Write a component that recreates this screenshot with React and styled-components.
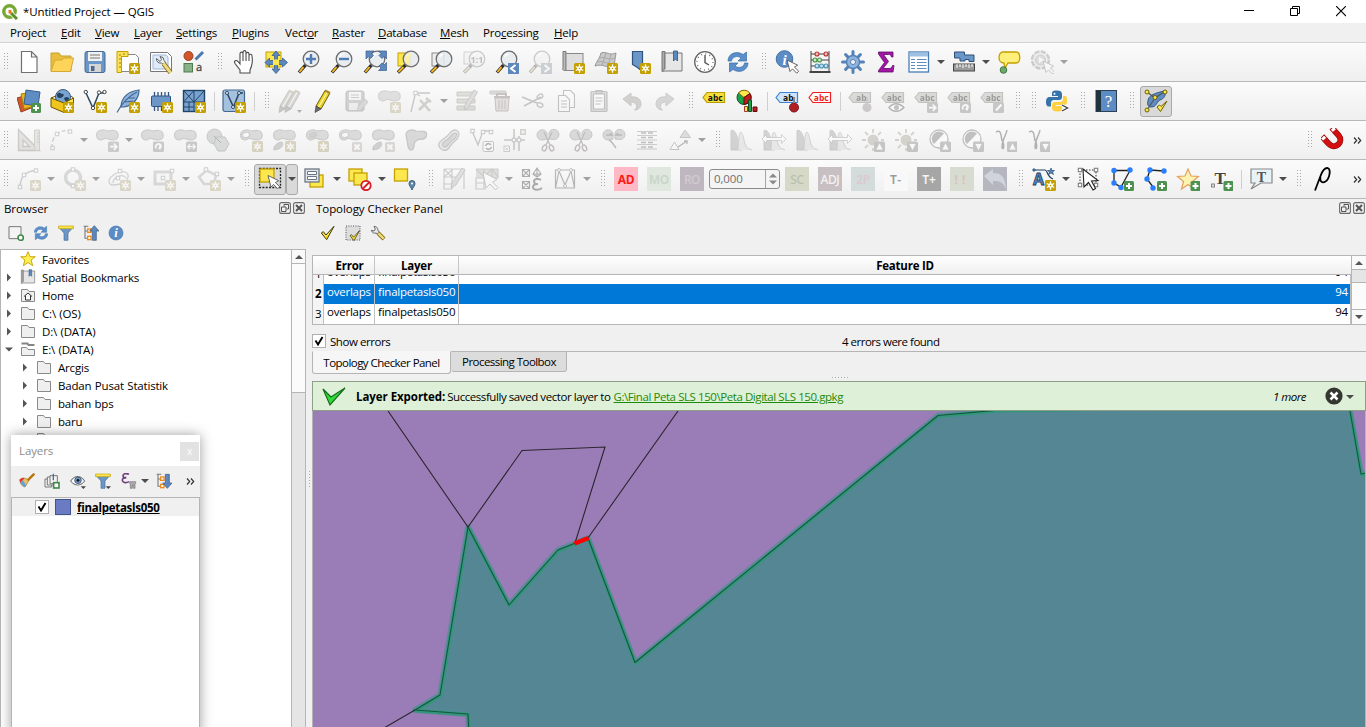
import React from 'react';
import styled, { createGlobalStyle, css } from 'styled-components';

const Global = createGlobalStyle`
  * { box-sizing: border-box; }
  html, body { margin: 0; padding: 0; overflow: hidden; }
  body { font-family: "Open Sans", "Noto Sans", sans-serif; font-size: 11.5px; letter-spacing: -0.2px; color: #000; background: #f0f0f0; }
  svg { display: block; flex: none; }
  svg text { letter-spacing: 0; }
`;

/* ---------- shared parts ---------- */

const Window = styled.div`
  width: 1366px;
  height: 727px;
  display: flex;
  flex-direction: column;
  overflow: hidden;
  background: #f0f0f0;
  white-space: nowrap;
  cursor: default;
`;

const TitleBar = styled.header`
  height: 23px;
  flex: none;
  display: flex;
  align-items: center;
  background: #fff;
  padding-left: 2px;
`;

const WindowTitle = styled.span`
  flex: 1;
  margin-left: 5px;
  letter-spacing: -0.13px;
`;

const Controls = styled.div`
  display: flex;
  width: 138px;
  height: 20px;
  justify-content: space-around;
  align-items: center;
  margin-right: 2px;
`;

const MenuBar = styled.nav`
  height: 20px;
  flex: none;
  display: flex;
  gap: 14px;
  padding-left: 10px;
  line-height: 20px;
  border-bottom: 1px solid #d2d2d2;
`;

const MenuItem = styled.span`
  width: ${(p) => p.$w}px;
  letter-spacing: -0.2px;
  u { text-underline-offset: 1px; }
`;

const ToolRow = styled.div`
  height: 39px;
  flex: none;
  display: flex;
  align-items: center;
  background: linear-gradient(#fbfbfb, #efefef);
  border-bottom: 1px solid #b8b8b8;
`;

const Tool = styled.div`
  width: 33px;
  height: 32px;
  padding-left: 5px;
  flex: none;
  display: flex;
  align-items: center;
  ${(p) => p.$off && css`opacity: ${p.$off === true ? 0.32 : p.$off}; filter: grayscale(0.7);`}
`;

const Pressed = styled.div`
  width: ${(p) => p.$w}px;
  height: 31px;
  flex: none;
  margin-left: ${(p) => p.$ml || 0}px;
  display: flex;
  align-items: center;
  justify-content: center;
  border: 1px solid #a9a9a9;
  border-radius: 3px;
  background: #d9d9d9;
`;

const GripBox = styled.span`
  width: ${(p) => p.$w || 16}px;
  height: 18px;
  flex: none;
  display: flex;
  justify-content: flex-end;
  padding-right: 3px;
`;

const GripDots = styled.i`
  width: 5px;
  height: 17px;
  background-image: radial-gradient(circle at 0.5px 0.5px, #aaa 0.7px, transparent 0.8px);
  background-size: 3px 3px;
`;

const Sep = styled.i`
  width: 7px;
  height: 19px;
  flex: none;
  background: linear-gradient(#cfcfcf, #cfcfcf) 4px 0 / 1px 100% no-repeat;
`;

const Spacer = styled.i`
  flex: 1;
`;

const ArrowBox = styled.i`
  width: 12px;
  flex: none;
  display: flex;
  justify-content: center;
  opacity: ${(p) => (p.$off ? 0.5 : 1)};
  &::after {
    content: "";
    border: 4px solid transparent;
    border-top-color: #4c4c4c;
    border-bottom: 0;
  }
`;

const More = styled.span`
  width: 17px;
  flex: none;
  display: flex;
  justify-content: center;
`;

const Tile = styled.span`
  width: 24px;
  height: 24px;
  display: flex;
  align-items: center;
  justify-content: center;
  background: ${(p) => p.$bg};
  color: ${(p) => p.$fg};
  font: ${(p) => p.$weight || 400} 12px "Noto Sans", sans-serif;
  letter-spacing: ${(p) => p.$ls ?? -0.4}px;
`;

const SpinBox = styled.div`
  width: 71px;
  height: 20px;
  margin-left: 1px;
  flex: none;
  display: flex;
  align-items: center;
  border: 1px solid #8b8b8b;
  border-radius: 3px;
  background: #f4f4f4;
  color: #6f6f72;
  padding-left: 4px;
  letter-spacing: -0.1px;
  line-height: 18px;
`;

const SpinButtons = styled.span`
  width: 14px;
  height: 18px;
  margin-left: auto;
  border-left: 1px solid #a5a5a5;
  display: flex;
  align-items: center;
  justify-content: center;
`;

/* ---------- icon drawings ---------- */

const Svg = ({ s = 24, children }) => (
  <svg width={s} height={s} viewBox="0 0 24 24" fill="none">{children}</svg>
);

const Star = () => (
  <g>
    <rect x="13" y="13" width="11" height="11" rx="1.5" fill="#c4a000" />
    <path d="M18.500 14.300v8.400M14.800 16.500l7.400 4M22.200 16.500l-7.400 4" stroke="#fff" strokeWidth="1.300" />
    <circle cx="18.500" cy="18.500" r="2.300" fill="#fff" />
    <circle cx="18.500" cy="18.500" r=".8" fill="#c4a000" />
  </g>
);
const Plus = () => (
  <g>
    <rect x="14" y="14" width="10" height="10" rx="1.500" fill="#4e9250" />
    <path d="M19 16v6M16 19h6" stroke="#fff" strokeWidth="2" />
  </g>
);
const Cross = () => (
  <g>
    <rect x="14" y="14" width="10" height="10" rx="1.500" fill="#c9a0a0" />
    <path d="M16.500 16.500l5 5M21.500 16.500l-5 5" stroke="#fff" strokeWidth="2" />
  </g>
);
const Box = ({ children }) => (
  <g>
    <rect x="13" y="13.500" width="11" height="10.500" rx="1.500" fill="#808880" />
    <g stroke="#fff" strokeWidth="1.700">{children}</g>
  </g>
);
const BoxRight = () => <Box><path d="M15 18.700h6M18.800 15.500l3 3.200-3 3.200" /></Box>;
const BoxTurn = () => <Box><path d="M16 20.500c-2-5 5-6 5-2.500 0 1-1 2-2.500 2M20 16.500v5" /></Box>;
const BoxMove = () => <Box><path d="M15 18.700h7M17 16.300l-2.200 2.400 2.200 2.400M20 16.300l2.200 2.400-2.200 2.400" strokeWidth="1.300" /></Box>;
const BoxUp = () => <Box><path d="M15.500 21.500h6l-3-6z" fill="#fff" strokeWidth=".2" /></Box>;
const BoxDown = () => <Box><path d="M15.500 16h6l-3 6z" fill="#fff" strokeWidth=".2" /></Box>;

const Blob = ({ hole, inner }) => (
  <g fill="#a9b1a7" stroke="#858c84" strokeWidth="1.200">
    <path d="M1.500 7C1.500 2.500 7 1 11 2.500c3 1 5-.500 8 0 5 .500 5.500 7.500 1.500 9-3 1.300-6.500-.500-9.500-1-2.500-.400-3 1.500-5.500 1.500C3 12 1.500 9.500 1.500 7z" />
    {hole && <ellipse cx="7" cy="7" rx="3.600" ry="2.600" fill="#fafafa" transform="rotate(-15 7 7)" />}
    {inner && <ellipse cx="8" cy="7" rx="3.800" ry="2.600" fill="#8d958b" transform="rotate(-15 8 7)" />}
  </g>
);
const Part = () => <path d="M2 22c-1-4 4-8 8-8 2 3 0 7-8 8z" fill="#949c92" stroke="#757c74" />;
const Lens = ({ x = 14, y = 9 }) => (
  <g>
    <path d={`M${x - 5.500} ${y + 6}L2 22.500`} stroke="#2e2e2e" strokeWidth="3.400" />
    <path d={`M${x - 7.500} ${y + 8}L2.500 22`} stroke="#f5b71f" strokeWidth="2" />
    <circle cx={x} cy={y} r="7.800" fill="#e8ebee" fillOpacity=".85" stroke="#6c6e70" strokeWidth="1.300" />
    <path d={`M${x - 4.500} ${y - 2}a5 5 0 0 1 4-3`} stroke="#fff" strokeWidth="1.500" />
  </g>
);
const Cursor = ({ x = 10, y = 10 }) => (
  <path transform={`translate(${x} ${y})`} d="M0 0l3 11.500 2.500-2.600 4.200 4.300 2-2-4.300-4.200 3.300-1.800z" fill="#fff" stroke="#555" strokeWidth=".9" />
);
const Tag = ({ fill = '#f7df3a', stroke = '#b89b00', color = '#111', text = 'abc', y = 3 }) => (
  <g>
    <path d={`M1 ${y + 5.500}l4-5h17.500v10H5z`} fill={fill} stroke={stroke} strokeWidth="1.200" />
    <text x="13.300" y={y + 8.600} fontSize="8.500" fontWeight="700" fontFamily="Noto Sans, sans-serif" textAnchor="middle" fill={color}>{text}</text>
  </g>
);
const Pencil = ({ dx = 0, body = '#e8cf28' }) => (
  <g transform={`translate(${dx} 0)`}>
    <path d="M6 17L15 1.500l5 2.500-9 16z" fill={body} stroke="#6d6313" strokeWidth="1" />
    <path d="M8.500 18.200L17.500 2.800" stroke="#fff8a8" strokeWidth="1.200" />
    <path d="M6 17l5 3-6 3.500z" fill="#6c6c6c" stroke="#333" strokeWidth=".6" />
    <path d="M15 1.500l5 2.500" stroke="#b0862c" strokeWidth="2" />
  </g>
);
const Hist = ({ arrows }) => (
  <g>
    <path d="M2 22V2.500C8 0 9 16 13 22z" fill="#9aaa90" stroke="#8a9582" />
    <path d="M9 22c1-24 4-20 6-10s5 8 8 10" fill="#d6d6d6" stroke="#9c9c9c" />
    {arrows && <path d="M0 11l4.500-4.500v3h15v-3L24 11l-4.500 4.500v-3h-15v3z" fill="#fff" stroke="#888" strokeWidth=".8" />}
  </g>
);
const Nodes = ({ pts }) => pts.map(([x, y]) => <rect key={`${x},${y}`} x={x - 1.700} y={y - 1.700} width="3.400" height="3.400" fill="#fff" stroke="#808080" strokeWidth="1.100" />);
const Refresh = () => (
  <g fill="#5a8fcb" stroke="#396fa8" strokeWidth=".7">
    <path d="M2 11C2 4 10 0 17 4.500L20.500 2v9H12l3-3C11 5 6 7 5.500 11z" />
    <path d="M22 13c0 7-8 11-15 6.500L3.500 22v-9H12l-3 3c4 3 9 1 9.500-3z" />
  </g>
);
const Scissors = () => (
  <g>
    <path d="M1 7C1 1 9 0 11 5v6C6 13 1 12 1 7zM13 5c1-5 9-5 10 1 0 6-5 6-10 5z" fill="#a4aca2" stroke="#757c74" />
    <path d="M8 4l6 13M16 4l-6 13" stroke="#666" strokeWidth="1.300" />
    <ellipse cx="8.500" cy="20" rx="2" ry="3" stroke="#8a5d60" strokeWidth="1.400" transform="rotate(25 8.500 20)" />
    <ellipse cx="15.500" cy="20" rx="2" ry="3" stroke="#8a5d60" strokeWidth="1.400" transform="rotate(-25 15.500 20)" />
  </g>
);
const YBox = ({ x, y, w = 13, h = 13 }) => <rect x={x} y={y} width={w} height={h} fill="#fde74f" stroke="#c4a000" strokeWidth="1.300" />;
const Globe = <g><circle cx="13" cy="8" r="7.500" fill="#79a3d0" stroke="#385a80" /><path d="M7 5c3-3 4 0 6 0s0 4-3 4-3-2-3-4zM14 9c3-2 5-1 5 1s-4 4-5-1z" fill="#27435f" /></g>;

const I = {
  newFile: <path d="M4.500 1.500h10l5.500 5.500v15.500H4.500zM14.500 1.500V7H20" fill="#fff" stroke="#717171" strokeWidth="1.200" />,
  open: <g><path d="M1 21V3h8l2 3h10v15z" fill="#e8be3c" stroke="#c99f2f" /><path d="M1 21.500L5 10h7l2-2h9.500l-3 13.500z" fill="#fcd45a" stroke="#d5a837" /></g>,
  save: <g><rect x="2" y="1.500" width="20" height="21" rx="2" fill="#6b96c8" stroke="#486a92" /><rect x="5" y="2" width="14" height="9" fill="#f2f2f2" /><path d="M7 5h10M7 8h10" stroke="#777" strokeWidth="1.200" /><rect x="6" y="14" width="12" height="8" fill="#d5d5d5" /><rect x="8" y="16" width="3.500" height="5" fill="#4c6a8d" /></g>,
  layout: <g><path d="M5.500 4.500h14l3 3v14h-17z" fill="#fff" stroke="#888" /><path d="M1 1.500h11v5H5.500v16H1z" fill="#fbe257" stroke="#c4a000" /><path d="M3 5h2M3 9h2M3 13h2M3 17h2M8 3v2" stroke="#9b8000" /><Star /></g>,
  layoutMgr: <g><path d="M1.500 2.500h17l4 4v15h-21z" fill="#fff" stroke="#777" /><path d="M4 5h13l2 2v12H4z" fill="#dfeafa" stroke="#9fb7d8" /><path d="M7.500 8.500a4 4 0 0 0 5 4.500l2 1.500 2-2-1.500-2a4 4 0 0 0-4-4l1.500 3-1.500 2z" fill="#f2f2f2" stroke="#666" /><path d="M14.500 13.500l7 9" stroke="#7c6811" strokeWidth="4.500" /><path d="M14.500 13.500l7 9" stroke="#f0d980" strokeWidth="3" /></g>,
  style: <g><circle cx="6.500" cy="6" r="4.500" fill="#d0562c" stroke="#9d3d1e" /><path d="M13.500 9.500L21 2" stroke="#4c79ae" strokeWidth="3" /><rect x="2" y="13.500" width="8.500" height="8.500" fill="#87b187" stroke="#4f7b4f" /><text x="14" y="21" fontSize="11" fontFamily="Open Sans, sans-serif" fill="#444" stroke="#444" strokeWidth=".3">a</text></g>,
  pan: <path d="M7 23v-3L2 13.500c-1.500-2.500 1-4 3-2L7 14V4c0-2.500 3-2.500 3 0V2.500c0-2.500 3-2.500 3 0V4c0-2.200 3-2.200 3 0v2c0-2.300 3-2.300 3 0 1 6 0 10-2 14v3zM10 4v7M13 4v7M16 5v6" fill="#fff" stroke="#4b4b4b" strokeWidth="1.100" transform="translate(2 0)" />,
  panSel: <g><rect x="2" y="2" width="15" height="15" fill="#fde74f" stroke="#c4a000" /><path d="M12 1l4 4.500h-2.500v5h5V8l5 4.500-5 4.500v-2.500h-5v4.500H16l-4 4.500-4-4.500h2.500v-4.500h-5V17L1 12.500 5.500 8v2.500h5v-5H8z" fill="#5c88bd" stroke="#3a5f8d" strokeWidth=".8" /><rect x="9" y="9.500" width="6" height="5.500" fill="#fde74f" /></g>,
  zoomIn: <g><Lens /><path d="M14 4v10M9 9h10" stroke="#4e7cb3" strokeWidth="2.400" /></g>,
  zoomOut: <g><Lens /><path d="M9 9h10" stroke="#4e7cb3" strokeWidth="2.400" /></g>,
  zoomFull: <g><Lens /><g fill="#5c88bd" stroke="#3a5f8d" strokeWidth=".7"><path d="M3 1h8L8.500 3.500 10.500 5.500 7.500 8.500 5.500 6.500 3 9zM23.500 1v8L21 6.500 19 8.500l-3-3 2-2L15.500 1zM23.500 20.500h-8l2.500-2.500-2-2 3-3 2 2 2.500-2.500z" /></g></g>,
  zoomSel: <g><rect x="2" y="3" width="12" height="13" fill="#fde74f" stroke="#c4a000" /><Lens x={15} /><path d="M15 3.500a6 6 0 0 0-6 5.500 6 6 0 0 0 4 5.500z" fill="#fdf09a" opacity=".8" /></g>,
  zoomLayer: <g><rect x="3" y="3" width="12" height="13" fill="#eee" stroke="#888" /><Lens x={15} /></g>,
  zoomNative: <g><rect x="2" y="2" width="12" height="12" fill="#eee" stroke="#888" /><Lens x={15} /><text x="15" y="12.500" textAnchor="middle" fontSize="9" fontWeight="700" fontFamily="Noto Sans, sans-serif" fill="#444">1:1</text></g>,
  zoomLast: <g><Lens /><rect x="13" y="13" width="11" height="11" fill="#5c88bd" /><path d="M20.500 15l-4.500 3.500 4.500 3.500" stroke="#fff" strokeWidth="2" /></g>,
  zoomNext: <g><Lens /><rect x="13" y="13" width="11" height="11" fill="#5c88bd" /><path d="M16.500 15l4.500 3.500-4.500 3.500" stroke="#fff" strokeWidth="2" /></g>,
  mapNew: <g><path d="M2 1.500h3v19H3.500c-2 0-2-2-1.500-3z" fill="#bbb" stroke="#777" /><rect x="5" y="3.500" width="17" height="17" fill="#dedede" stroke="#888" /><Star /></g>,
  map3d: <g><path d="M7 3c6-2 8 3 15 0l-2 13c-7 3-11-3-19 0 2-6 4-6 6-13z" fill="#c9c9c9" stroke="#999" /><path d="M5 8c6-2 10 3 16 0M3 12c6-2 10 3 17 1M12 3L8 15M17 4l-3 13" stroke="#a2a2a2" strokeWidth=".8" /><Star /></g>,
  bookNew: <g><path d="M5.500 1.500h10v20l-5-4-5-3z" fill="#6b96c8" stroke="#2f5480" strokeWidth="1.200" /><Star /></g>,
  book: <g><path d="M2 1.500h3v19l-3 1z" fill="#aaa" stroke="#777" /><path d="M5 3h17v18H3c-1-1 0-2 2-2z" fill="#e6e6e6" stroke="#777" /><path d="M13.500 1h4v10l-2-2-2 2z" fill="#5c88bd" stroke="#2f5480" strokeWidth=".8" /></g>,
  clock: <g><circle cx="12" cy="12" r="10.300" fill="#fff" stroke="#666" strokeWidth="1.300" /><circle cx="12" cy="12" r="8" stroke="#777" strokeWidth="1.500" strokeDasharray="1 3.190" /><path d="M12 5v7.500l4 2.500" stroke="#555" strokeWidth="1.400" /></g>,
  refresh: <Refresh />,
  identify: <g><circle cx="9.500" cy="9" r="8.300" fill="#5b8cc6" stroke="#4773a6" /><text x="9.500" y="14.500" textAnchor="middle" fontSize="15" fontWeight="700" fontStyle="italic" fontFamily="Liberation Serif, serif" fill="#fff">i</text><Cursor x={12} y={10} /></g>,
  abacus: <g stroke="#444"><path d="M3 1v21M21 1v21M3 4h18M3 10h18M3 16h18" /><path d="M1.500 22h21" strokeWidth="2" /><g strokeWidth="1.100"><g fill="#f5b6b6" stroke="#b33"><circle cx="9" cy="4" r="2" /><circle cx="18" cy="4" r="2" /></g><g fill="#c5ebc0" stroke="#4b9448"><circle cx="7" cy="10" r="2" /><circle cx="11.500" cy="10" r="2" /></g><g fill="#c1e4f5" stroke="#4c8dad"><circle cx="9" cy="16" r="2" /><circle cx="13.500" cy="16" r="2" /><circle cx="18" cy="16" r="2" /></g></g></g>,
  gear: <g><path d="M12 1.500v21M1.500 12h21M4.600 4.600l14.800 14.800M19.400 4.600L4.600 19.400" stroke="#5582b7" strokeWidth="3" strokeLinecap="round" /><circle cx="12" cy="12" r="6.500" fill="#8fb3dc" stroke="#5582b7" strokeWidth="1.500" /><circle cx="12" cy="12" r="2.500" fill="#f7f7f7" stroke="#5582b7" /></g>,
  sigma: <path d="M4.500 2h14.500v5h-1.500c-.500-2-1.500-2.500-3-2.500H9.500l5 7-5.500 7h6c2 0 3-.800 3.500-3H20l-1 6.500H4.500v-1.500L10.500 12.500 4.500 4z" fill="#a316a3" stroke="#5f0d6b" strokeWidth=".8" />,
  table: <g><rect x="2" y="2" width="19.500" height="20" fill="#fff" stroke="#4a7db5" strokeWidth="1.300" /><rect x="2.500" y="2.500" width="18.500" height="4" fill="#9fc0e5" /><path d="M4 9.500h4M4 12.500h4M4 15.500h4M4 18.500h4M10 9.500h9.500M10 12.500h9.500M10 15.500h9.500M10 18.500h9.500" stroke="#5d8bc0" strokeWidth="1.200" /></g>,
  measure: <g><path d="M2.500 2h10v3H22v6.500h-5V9.500h-4V11H8V8H2.500z" fill="#6b96c8" stroke="#2c4e78" /><rect x="1.500" y="14" width="21" height="7" fill="#9a9a9a" stroke="#444" /><path d="M5 14v4M8 14v3M11 14v4M14 14v3M17 14v4M20 14v3" stroke="#fff" /></g>,
  tips: <g><path d="M6 2h13c5 0 5 11 0 11h-8L8 18l-1-5C0 13 1 2 6 2z" fill="#fdef7a" stroke="#c4a000" strokeWidth="1.300" /><circle cx="6.500" cy="20" r="3.300" fill="#6ba86b" stroke="#3f7540" /></g>,
  action: <g><circle cx="10.500" cy="10" r="8.500" fill="#ddd" stroke="#777" strokeWidth="2.500" strokeDasharray="5.300 1.380" /><circle cx="10.500" cy="10" r="5" fill="#aaa" stroke="#777" /><path d="M9 7l5 3-5 3z" fill="#fff" /><Cursor x={13} y={11} /></g>,

  dsManager: <g><path d="M0 9l10-3 4 13-10 4z" fill="#d0562c" stroke="#9d3d1e" /><path d="M4 5l12-2 2 14-11 3z" fill="#e5b51d" stroke="#a98200" /><path d="M9 1l14 2-2 14-14-2z" fill="#5f8dc3" stroke="#385f8e" /><Plus /></g>,
  geopackage: <g>{Globe}<path d="M1 9l13 5v9.500L1 18z" fill="#f0c51e" stroke="#6b5300" /><path d="M14 14l9.500-5v9.500l-9.500 5z" fill="#fde74f" stroke="#6b5300" /><path d="M1 9l5-2M23.500 9L21 7" stroke="#6b5300" /><Star /></g>,
  shapefile: <g><path d="M3 4l7 15 6-15h6" stroke="#2c4a66" strokeWidth="1.500" /><g fill="#fff" stroke="#444"><circle cx="2.800" cy="3" r="1.700" /><circle cx="16" cy="3.500" r="1.700" /><circle cx="21.500" cy="3" r="1.700" /><circle cx="10" cy="19" r="1.700" /></g><Star /></g>,
  feather: <g><path d="M5 18C5 8 13 2 23 1c0 8-5 15-15 17z" fill="#8fb3dc" stroke="#3f6693" strokeWidth="1.200" /><path d="M1 23.500C6 14 13 7 21 3M9 13l8-1M12 9h7" stroke="#3f6693" strokeWidth="1.100" /><Star /></g>,
  memory: <g><rect x="2.500" y="7" width="19" height="10.500" rx="1" fill="#6b96c8" stroke="#2f5480" /><path d="M5.500 7V3M9 7V3M12.500 7V3M16 7V3M19.500 7V3M5.500 18v4M9 18v4M12.500 18v4" stroke="#2f5480" strokeWidth="1.300" /><Star /></g>,
  mesh: <g><rect x="1.500" y="1.500" width="21" height="21" fill="#7aa2d0" stroke="#1f4468" strokeWidth="1.400" /><path d="M12 1.500v21M1.500 13h21M1.500 1.500L12 13M12 1.500L1.500 13M22.500 1.500L12 13M7 13v9.500M1.500 18H12" stroke="#1f4468" /><Star /></g>,
  virtual: <g><rect x="1" y="1" width="21.500" height="21.500" rx="2" fill="#a5c1e0" stroke="#44678f" strokeWidth="1.200" /><path d="M5 4l6.500 14L17 4h4" stroke="#29445f" strokeWidth="1.500" /><g fill="#fff" stroke="#29445f"><circle cx="5" cy="4" r="1.500" /><circle cx="17" cy="4" r="1.500" /><circle cx="11" cy="18" r="1.500" /></g><Star /></g>,
  pencils: <g><Pencil dx={-4} body="#a89090" /><Pencil dx={2} body="#a89090" /><path d="M19 21h5l-2.500 3z" fill="#222" /></g>,
  pencil: <Pencil dx={-1} />,
  saveEdits: <g><rect x="2" y="2" width="18" height="20" rx="2" fill="#888" stroke="#555" /><rect x="5" y="3" width="12" height="8" fill="#eee" /><path d="M7 6h8M7 8.500h8" stroke="#777" /><rect x="5" y="14" width="9" height="7" fill="#ddd" /><path d="M13 22l1-4 7-8 3 3-7 8z" fill="#b39a9a" stroke="#777" /></g>,
  addFeature: <g><Blob /><Star /></g>,
  vertex: <g><path d="M1 23L5.500 4H20M5 4l5 3" stroke="#666" strokeWidth="1.300" /><Nodes pts={[[5.500, 4]]} /><path d="M9 21L19 11M16 9l5 4M10 11l10 11" stroke="#8a8468" strokeWidth="2.600" /></g>,
  multiEdit: <g><path d="M2 3h18v4H2zM2 10h18v4H2zM2 17h18v4H2z" fill="#b0ae80" stroke="#77755a" /><path d="M9 21l1-5L19 1l3.500 2-9 15z" fill="#bda6a6" stroke="#776767" /></g>,
  del: <g><path d="M2 2h16v3H2z" fill="#a5a572" stroke="#777" /><path d="M6 8h16M9 7V5h9v2" stroke="#80504f" strokeWidth="2" /><path d="M7 9h14l-1 13H8z" fill="#d3b0b0" stroke="#80504f" /><path d="M11 11v9M14 11v9M17 11v9" stroke="#80504f" /></g>,
  cut: <g><path d="M1 8l15 6M3 17l17-9" stroke="#666" strokeWidth="1.800" /><ellipse cx="19" cy="7.500" rx="3" ry="2" stroke="#666" strokeWidth="1.400" transform="rotate(-30 19 7.500)" /><ellipse cx="19" cy="16" rx="3" ry="2" stroke="#666" strokeWidth="1.400" transform="rotate(25 19 16)" /></g>,
  copy: <g fill="#fff" stroke="#555" strokeWidth="1.100"><path d="M9.500 1.500h7l4 4v13h-11z" /><path d="M4.500 6.500h7l4 4v12h-11zM7 12h6M7 15h6M7 18h6" /></g>,
  paste: <g stroke="#555" strokeWidth="1.200"><rect x="4" y="2.500" width="16" height="20" rx="1" fill="#aaa" /><path d="M6.500 5h11v15h-11z" fill="#fff" /><path d="M9 1.500h6v3H9zM8.500 9h7M8.500 12h7M8.500 15h5" /></g>,
  undo: <path d="M3 10l8-6v4c7-1 10 3 10 7 0 3.500-3 6-6.500 6 4-3 2-8-3.500-8v4z" fill="#9b8174" stroke="#7d675c" />,
  redo: <path d="M21 10l-8-6v4C6 7 3 11 3 15c0 3.500 3 6 6.500 6-4-3-2-8 3.500-8v4z" fill="#8b998b" stroke="#6a786a" />,
  label: <Tag />,
  diagram: <g><circle cx="9" cy="8.500" r="7" fill="#17a349" stroke="#174a22" /><path d="M9 8.500L3.500 4A7 7 0 0 1 15 4.500z" fill="#fde74f" stroke="#8f6a00" /><path d="M9 8.500L15 4.500a7 7 0 0 1-1 9L9 15.500z" fill="#c01a1a" stroke="#5d0c0c" /><path d="M9.500 17.500H12.500v5H9.500z" fill="#fde74f" stroke="#a33" /><path d="M13.500 11h3v11.500h-3z" fill="#17a349" stroke="#174a22" /><path d="M18 18h4v4.500h-4z" fill="#c01a1a" stroke="#5d0c0c" /></g>,
  labelPin: <g><Tag fill="#cfe3fb" stroke="#3a83d8" text="ab" /><circle cx="19" cy="18.500" r="4.500" fill="#b01f24" stroke="#7d1216" /><path d="M19 14V8" stroke="#888" strokeWidth="2" /></g>,
  labelRed: <Tag fill="#fff" stroke="#f21d1d" color="#f21d1d" />,
  tagPin: <g><Tag text="ab" fill="#b5b090" stroke="#777" /><circle cx="19" cy="18.500" r="4.500" fill="#a08888" /><path d="M19 14V8" stroke="#888" strokeWidth="2" /></g>,
  tagEye: <g><Tag fill="#b5b090" stroke="#777" /><path d="M8 18.500c4-5 10-5 15 0-5 5-11 5-15 0z" fill="#fff" stroke="#555" strokeWidth="1.300" /><circle cx="15.500" cy="18.500" r="2.500" fill="#777" /></g>,
  tagMove: <g><Tag fill="#b5b090" stroke="#777" /><BoxRight /></g>,
  tagRot: <g><Tag fill="#b5b090" stroke="#777" /><BoxTurn /></g>,
  tagEdit: <g><Tag fill="#b5b090" stroke="#777" /><Box><path d="M16 21.500l5.500-6" strokeWidth="2.200" /></Box></g>,
  python: <g><path d="M12 1.500c-5 0-5 1.500-5 3.500v2h6v1H5c-3 0-4 2-4 5 0 4 2 4.500 3 4.500h2V14c0-2 1-3 3-3h5c2 0 3-1 3-3V5c0-2.500-2-3.500-5-3.500z" fill="#3573a8" /><circle cx="9.500" cy="4.700" r="1" fill="#fff" /><path d="M12 22.500c5 0 5-1.500 5-3.500v-2h-6v-1h8c3 0 3-2 3-4.500 0-4-1-4.500-2-4.500h-2v3c0 2-1 3-3 3h-5c-2 0-3 1-3 3v3c0 2.500 2 3.500 5 3.500z" fill="#fdd141" /><path d="M17 16l5.500 3-5.500 3" stroke="#fff" strokeWidth="3" /><path d="M17 16l5.500 3-5.500 3" stroke="#444" strokeWidth="1.400" /></g>,
  help: <g><rect x="2" y="1.500" width="20.500" height="21" fill="#5c8cc4" stroke="#2d3f52" /><rect x="2" y="1.500" width="5" height="21" fill="#1f333f" /><text x="14.500" y="17.500" textAnchor="middle" fontSize="17" fontFamily="Liberation Serif, serif" fill="#fff">?</text></g>,
  topology: <g><path d="M4 12C4 6 12 4 20 2c3 3 0 8-4 9-4 2-3 7-9 7-3 0-4-3-3-6z" fill="#5f8dc3" stroke="#355781" /><path d="M3 3l8 6 9-6M3 21l8-12" stroke="#555" strokeWidth="1.200" /><g fill="#fde74f" stroke="#6b6000"><circle cx="3" cy="3" r="2" /><circle cx="21" cy="3" r="2" /><circle cx="11" cy="8.500" r="2" /><circle cx="3" cy="21" r="2" /></g><path d="M13 18l3.500 4.500L23 12l-6 5.500-1.500-1.500z" fill="#fde74f" stroke="#6b6000" /></g>,

  cad: <g><path d="M1.500 1.500v21h21zM6 12v6.500h6.500z" fill="#cdb7ad" stroke="#7d6b66" fillRule="evenodd" strokeWidth="1.300" /><path d="M17.500 2h5v20.500h-4L17.500 18z" fill="#c9c4a4" stroke="#8a866c" /><path d="M20 5h2M20 8h2M20 11h2M20 14h2" stroke="#777" /></g>,
  curve: <g><path d="M2 21c0-7 1-12 5-14" stroke="#777" strokeWidth="1.300" strokeDasharray="5 2" /><path d="M7 7c3-4 7-5 13-4" stroke="#777" strokeDasharray="4 2" strokeWidth="1.300" /><Nodes pts={[[2.500, 20], [7, 6], [20, 3.500]]} /></g>,
  blobRight: <g><Blob /><BoxRight /></g>,
  blobTurn: <g><Blob /><BoxTurn /></g>,
  blobMove: <g><Blob /><BoxMove /></g>,
  simplify: <g><circle cx="8.500" cy="8.500" r="7.500" fill="#a4aca2" stroke="#757c74" /><path d="M10 9h9l4 7-4 7h-7l-4-7z" fill="#a9b5bb" stroke="#6b7a80" /><path d="M8 8l7 7" stroke="#444" /></g>,
  addRing: <g><Blob hole /><Star /></g>,
  addPart: <g><Blob /><Part /><Star /></g>,
  fillRing: <g><Blob inner /><Star /></g>,
  delRing: <g><Blob hole /><Cross /></g>,
  delPart: <g><Blob /><Part /><Cross /></g>,
  reshape: <path d="M2 7C2 2 8 1 12 3c3 1 5 0 8 .500 4 1 3 7-1 7.500-4 .500-6 0-8 3s0 8-4 8c-3 0-3-4-3.500-7z" fill="#a4aca2" stroke="#757c74" strokeWidth="1.300" />,
  offset: <g><path d="M3 20c-4-5 2-8 6-11s5-8 10-7c5 2 3 8-1 11s-4 5-7 8c-2 2-6 2-8-1z" fill="#cfd4c8" stroke="#757c74" strokeWidth="1.100" /><path d="M6 18c-2-3 2-5 5-7s4-6 7-6 2 4-1 6-4 4-6 6-4 3-5 1z" fill="#a4aca2" stroke="#757c74" strokeWidth="1.100" /></g>,
  reverse: <g><path d="M2 3l6 14 5-14h8" stroke="#777" strokeWidth="1.300" /><Nodes pts={[[2.500, 3], [13, 4], [21, 4]]} /><rect x="13" y="13.500" width="10.500" height="10" rx="1.500" fill="#fff" stroke="#777" /><path d="M15.500 18c1-3 4-3 5.500-1M21.500 19c-1 3-4 3-5.500 1" stroke="#555" strokeWidth="1.600" /></g>,
  trim: <g><path d="M11 1v21M1 12h10M11 12h11M16 8v15" stroke="#777" strokeWidth="1.500" /><Nodes pts={[[11, 12], [16, 12]]} /><rect x="1" y="18" width="5.500" height="5.500" fill="#fff" stroke="#b38383" /><path d="M2.500 19.500l2.500 2.500M5 19.500L2.500 22" stroke="#b38383" /><rect x="17" y="1" width="6" height="6" fill="#9c9777" /><path d="M20 2v4M18 4h4" stroke="#fff" /></g>,
  splitF: <Scissors />,
  splitP: <Scissors />,
  merge: <g><path d="M1 7C1 1 9 0 11 5v6C6 13 1 12 1 7zM13 5c1-5 9-5 10 1 0 6-5 6-10 5z" fill="#a4aca2" stroke="#757c74" /><path d="M4 7h6l-2-2M20 7h-6l2-2M7 12c3 1 4 4 7 8" stroke="#555" strokeWidth="1.400" /></g>,
  mergeAttr: <g stroke="#888" strokeWidth="1.100"><path d="M2 3.500h20M2 7.500h20M2 12h20M2 16.500h20M2 21h20" /><path d="M6 5h5M18 5h-5M6 9.500h5M18 9.500h-5M6 14.500h5M18 14.500h-5M6 19h5M18 19h-5" stroke="#666" strokeWidth="1.300" /></g>,
  scale: <g><path d="M2 21.500h9L6.500 14z" fill="#fff" stroke="#777" /><path d="M12 9.500h10.500L17 2z" fill="#aab5aa" stroke="#777" /><path d="M10 17l9-6M16 11h3v3" stroke="#555" strokeWidth="1.300" transform="translate(0 2)" /></g>,
  hist1: <Hist />,
  hist2: <Hist arrows />,
  sunUp: <g><circle cx="12" cy="12" r="5.500" fill="#aaa67c" /><path d="M12 1v4M12 20v3M1 12h4M4 4l3 3M20 4l-3 3M4 20l3-3M20 12h3" stroke="#aaa67c" strokeWidth="1.800" /><BoxUp /></g>,
  sunDown: <g><circle cx="12" cy="12" r="5.500" fill="#aaa67c" /><path d="M12 1v4M12 20v3M1 12h4M4 4l3 3M20 4l-3 3M4 20l3-3M20 12h3" stroke="#aaa67c" strokeWidth="1.800" /><BoxDown /></g>,
  conUp: <g><circle cx="12" cy="11" r="9" fill="#fff" stroke="#777" strokeWidth="1.300" /><path d="M7 16A7 7 0 0 1 17 5.500z" fill="#777" /><BoxUp /></g>,
  conDown: <g><circle cx="12" cy="11" r="9" fill="#fff" stroke="#777" strokeWidth="1.300" /><path d="M7 16A7 7 0 0 1 17 5.500z" fill="#777" /><BoxDown /></g>,
  gamUp: <g transform="translate(1 0)"><path d="M2 4c5-3 5 3 6 9M13 2c-1 6-5 9-5 17 0 3 3 2 1-5" stroke="#555" strokeWidth="1.500" /><BoxUp /></g>,
  gamDown: <g transform="translate(1 0)"><path d="M2 4c5-3 5 3 6 9M13 2c-1 6-5 9-5 17 0 3 3 2 1-5" stroke="#555" strokeWidth="1.500" /><BoxDown /></g>,
  magnet: <g transform="translate(13.500 12.500) rotate(-42) translate(-12 -12)"><path d="M5.500 5v6a6.500 6.500 0 0 0 13 0V5" stroke="#8b0505" strokeWidth="6" /><path d="M5.500 5v6a6.500 6.500 0 0 0 13 0V5" stroke="#d40f0f" strokeWidth="4.800" /><path d="M3 1h5v4H3zM16 1h5v4h-5z" fill="#fff" stroke="#b01010" /></g>,

  arc: <g><path d="M3 21C3 10 8 4 19 3.500" stroke="#777" strokeWidth="1.400" /><Nodes pts={[[3, 20], [7, 8], [19, 3.500]]} /><Star /></g>,
  circle: <g><circle cx="11" cy="10.500" r="7.500" stroke="#999" strokeWidth="3.500" /><Nodes pts={[[11, 2.500], [11, 19]]} /><Star /></g>,
  ellipse: <g><path d="M3 17C-2 11 12 3 18 5s3 10-5 12-9 1-10 0zM6 16c0-6 10-10 13-5" stroke="#888" strokeWidth="1.300" /><Nodes pts={[[11, 11], [13, 4]]} /><Star /></g>,
  rect: <g><rect x="3" y="5" width="16" height="12" stroke="#999" strokeWidth="3" /><Nodes pts={[[11, 11], [20, 4]]} /><Star /></g>,
  polygon: <g><path d="M9.500 3.500l9.500 4.500-2 9H7l-5-7z" stroke="#999" strokeWidth="2.600" /><Nodes pts={[[9, 2.500], [20, 7]]} /><Star /></g>,
  select: <g><rect x="1.500" y="1.500" width="21" height="19" stroke="#222" strokeWidth="1.300" strokeDasharray="2 1.300" /><YBox x={2} y={2} w={14} h={13} /><Cursor x={10} y={8.500} /></g>,
  selForm: <g transform="translate(1 0)"><YBox x={6} y={8} w={13} h={12} /><rect x="1" y="2" width="14" height="13" fill="#dfe6ee" stroke="#6e7880" strokeWidth="1.300" /><path d="M3.500 4.500h9v3h-9zM3.500 9.500h9v3h-9z" fill="#fff" stroke="#6e7880" /></g>,
  desel: <g><YBox x={1} y={2} w={13} h={12} /><YBox x={6} y={6} w={13} h={12} /><circle cx="18" cy="18.500" r="4.700" fill="#fff" stroke="#d51d24" strokeWidth="1.800" /><path d="M15 21.500l6-6" stroke="#d51d24" strokeWidth="1.800" /></g>,
  selLoc: <g><YBox x={1.500} y={2} w={13} h={12} /><path d="M19 23c-1-3-3-4-3-6.500a3 3 0 0 1 6 0c0 2.500-2 3.500-3 6.500z" fill="#5c88a8" stroke="#3f6480" /><circle cx="19" cy="16.500" r="1" fill="#fff" /></g>,
  meshEdit: <g><path d="M2 2h20v20M2 2v20h8M2 10h18M2 2l9 9M11 2l-9 8M10 2v20M2 17h8" stroke="#777" strokeWidth="1.200" /><path d="M9 21l1-5L20 1l3 2-9 15z" fill="#bda6a6" stroke="#776767" /></g>,
  meshSel: <g><path d="M1 2h22v9H1z" fill="#b3af8e" /><path d="M1 2h22v9H1v11h10M1 16h9M9 2v20M17 2v9M1 2l8 8 8-8 6 8" stroke="#777" strokeWidth="1.200" /><path transform="translate(8 5)" d="M0 0l3 16 4-4 5.500 6 2.500-2.500-5.500-5.500 4.500-2.500z" fill="#fff" stroke="#666" /></g>,
  meshTrans: <g stroke="#666" strokeWidth="1.100"><path d="M2.500 2.500h7v7h-7zM2.500 2.500l7 7M9.500 2.500l-7 7M2.500 14.500h7v7h-7zM2.500 14.500l7 7M9.500 14.500l-7 7M17 1v9M12.500 7h9M17 1l-4 6 4 3 4-3z" /><path d="M21 13c-3-2-7-1-7 1.500 0 2 2 2.500 4 2.500-3 0-5 1-5 3 0 3 5 4 9 1" strokeWidth="2" /></g>,
  meshForce: <g><path d="M2.500 3h19v18h-19zM2.500 21L6 4l6 14 6-14 3.500 17" stroke="#777" strokeWidth="1.200" /><g fill="#fff" stroke="#888"><circle cx="6" cy="3" r="1.500" /><circle cx="18" cy="3" r="1.500" /><circle cx="12" cy="19" r="1.500" /></g></g>,
  annoLayer: <g><text x="1" y="18" fontSize="16" fontWeight="700" fontFamily="Noto Sans, sans-serif" fill="#5587bd" stroke="#1d3f63" strokeWidth=".8">A</text><path d="M2 3h11c3 0 1 6 8 9" stroke="#1d3f63" strokeWidth="1.200" /><path d="M19 1l1 2.500h2.500l-2 1.500 1 2.500-2.500-1.500L16.500 7.500l1-2.500-2-1.500H18z" fill="#5587bd" stroke="#1d3f63" strokeWidth=".6" /><circle cx="2" cy="3" r="1.300" fill="#5587bd" stroke="#1d3f63" strokeWidth=".6" /><Star /></g>,
  annoSel: <g><rect x="3" y="3" width="16" height="15" stroke="#333" strokeDasharray="1.500 1.500" /><Nodes pts={[[3, 3], [19, 3], [3, 18], [19, 18]]} /><path transform="translate(6 2)" d="M0 0l1 18 4.500-4.500 4.500 7.500 2.500-1.500-4-7.500 6.500-.500z" fill="#fff" stroke="#222" strokeWidth="1.100" /></g>,
  annoPoly: <g transform="translate(1 0)"><path d="M3 3.500h16L10 20l-7-4z" stroke="#222" strokeWidth="1.300" /><g fill="#2a7fff"><circle cx="3" cy="3.500" r="2.700" /><circle cx="19" cy="3" r="2.700" /><circle cx="3" cy="16" r="2.700" /><circle cx="10" cy="20.500" r="2.700" /></g><g transform="translate(-1 0)"><Plus /></g></g>,
  annoLine: <g><path d="M21 4L7 3 4 12l6 8" stroke="#222" strokeWidth="1.300" /><g fill="#2a7fff"><circle cx="21" cy="4" r="2.700" /><circle cx="7" cy="3" r="2.700" /><circle cx="4" cy="12" r="2.700" /><circle cx="10" cy="21" r="2.700" /></g><Plus /></g>,
  annoStar: <g transform="translate(.5 0)"><path d="M11.500 2l3 7 7.500.500-6 5 2 7.500-6.500-4.500L5 22l2-7.500-6-5 7.500-.500z" fill="#fdf3b0" stroke="#e3a15e" strokeWidth="1.200" /><Plus /></g>,
  annoText: <g transform="translate(.5 0)"><text x="5" y="17" fontSize="17" fontWeight="700" fontFamily="Liberation Serif, serif" fill="#444">T</text><rect x="2" y="17" width="3" height="3" fill="#ddd" stroke="#888" /><Plus /></g>,
  balloon: <g><path d="M2 2h21v14h-11l-10 6 4-6H2z" fill="#e8f3f8" stroke="#888" strokeWidth="1.200" /><text x="12.500" y="14.500" textAnchor="middle" fontSize="14" fontWeight="700" fontFamily="Liberation Serif, serif" fill="#555">T</text></g>,
  rho: <path d="M5 23.500L10.500 9C13 2 15 .800 17.500 1c4 1 2 11-2 13.500-3 1.800-6 .500-5-4.500" stroke="#000" strokeWidth="1.800" />,
};

const A = () => <ArrowBox />;
const AO = () => <ArrowBox $off />;
const Grip = ({ w }) => <GripBox $w={w}><GripDots /></GripBox>;
const T = ({ n, off }) => <Tool $off={off}><Svg>{I[n]}</Svg></Tool>;
const Tools = ({ names, off }) => names.split(' ').map((n, i) => <T key={n + i} n={n} off={off} />);
const Chevrons = () => (
  <More><svg width="9" height="7" viewBox="0 0 9 7" fill="none"><path d="M1 .5l2.700 3-2.700 3M5 .5l2.700 3-2.700 3" stroke="#333" strokeWidth="1.200" /></svg></More>
);
const ButtonTile = ({ label, ...rest }) => <Tool><Tile {...rest}>{label}</Tile></Tool>;

/* ---------- dock panels ---------- */

const Workspace = styled.main`
  flex: 1;
  min-height: 0;
  display: flex;
  position: relative;
`;

const BrowserDock = styled.aside`
  width: 306px;
  flex: none;
  display: flex;
  flex-direction: column;
`;

const DockTitle = styled.div`
  height: 20px;
  flex: none;
  display: flex;
  align-items: center;
  padding: 0 1px 2px 4px;
  letter-spacing: -0.06px;
`;

const DockButtons = styled.span`
  margin-left: auto;
  display: flex;
  gap: 2px;
`;

const DockTools = styled.div`
  height: 30px;
  flex: none;
  display: flex;
  gap: 9px;
  align-items: center;
  padding: 0 0 2px ${(p) => p.$pl}px;
`;

const TreeFrame = styled.div`
  flex: 1;
  min-height: 0;
  display: flex;
  border: 1px solid #b5b5b5;
  border-bottom: 0;
  background: #fff;
`;

const Tree = styled.ul`
  flex: 1;
  margin: 0;
  padding: 0;
  list-style: none;
  overflow: hidden;
`;

const TreeRow = styled.li`
  height: 18px;
  display: flex;
  align-items: center;
  padding-left: ${(p) => 3 + p.$depth * 16}px;
  letter-spacing: -0.18px;
  word-spacing: 0.6px;
`;

const Twisty = styled.span`
  width: 16px;
  display: flex;
  flex: none;
`;

const NodeIcon = styled.span`
  width: 22px;
  flex: none;
`;

const VScroll = styled.div`
  width: ${(p) => p.$w || 14}px;
  flex: none;
  display: flex;
  flex-direction: column;
  border-left: 1px solid #b5b5b5;
  background: #e5e5e5;
`;

const ScrollArrow = styled.div`
  height: 14px;
  display: flex;
  flex: none;
  align-items: center;
  justify-content: center;
  background: #fafafa;
  border-bottom: ${(p) => (p.$down ? 0 : '1px solid #b5b5b5')};
  &::after {
    content: "";
    border: 4px solid transparent;
    ${(p) => (p.$down ? 'border-top-color: #555; border-bottom: 0;' : 'border-bottom-color: #555; border-top: 0;')}
  }
`;

const ScrollThumb = styled.div`
  height: ${(p) => p.$h}px;
  background: #fbfbfb;
  border-top: ${(p) => (p.$top ? '1px solid #b5b5b5' : 0)};
  border-bottom: 1px solid #b5b5b5;
`;

const Splitter = styled.div`
  width: 6px;
  flex: none;
  display: flex;
  align-items: center;
  justify-content: center;
  padding-top: 32px;
`;

const SplitDots = styled.i`
  width: ${(p) => (p.$row ? 17 : 1)}px;
  height: ${(p) => (p.$row ? 1 : 17)}px;
  background: repeating-linear-gradient(${(p) => (p.$row ? '90deg' : '180deg')}, #aaa 0 1px, transparent 1px 3px);
`;

const Center = styled.section`
  flex: 1;
  min-width: 0;
  display: flex;
  flex-direction: column;
`;

const TableFrame = styled.div`
  height: 70px;
  flex: none;
  margin-top: 6px;
  display: flex;
  border: 1px solid #b5b5b5;
  border-right: 0;
  background: #fff;
`;

const Grid = styled.div`
  flex: 1;
  min-width: 0;
`;

const HeadRow = styled.div`
  height: 19px;
  display: grid;
  grid-template-columns: 62px 84px 1fr;
  background: linear-gradient(#fff, #efefef);
  border-bottom: 1px solid #b5b5b5;
  line-height: 20px;
  font-weight: 700;
  text-align: center;
  letter-spacing: -0.22px;
`;

const HeadCell = styled.span`
  border-right: 1px solid #c6c6c6;
  padding-left: ${(p) => p.$pl || 0}px;
  &:last-child { border-right: 0; }
`;

const Viewport = styled.div`
  height: 49px;
  overflow: hidden;
  display: flex;
  flex-direction: column;
  justify-content: flex-end;
`;

const DataRow = styled.div`
  height: 20px;
  flex: none;
  display: grid;
  grid-template-columns: 11px 51px 84px 1fr;
  border-bottom: 1px solid #c0c0c0;
  line-height: 16px;
  > * { border-right: 1px solid #c0c0c0; }
  > :not(:first-child) {
    background: ${(p) => (p.$sel ? '#0078d7' : '#fff')};
    color: ${(p) => (p.$sel ? '#fff' : '#000')};
  }
  > :first-child {
    background: #f4f4f4;
    font-weight: ${(p) => (p.$sel ? 700 : 400)};
    line-height: 20px;
    padding-left: 2px;
  }
`;

const Cell = styled.span`
  padding-left: 3px;
  letter-spacing: -0.23px;
`;

const NumCell = styled.span`
  text-align: right;
  padding-right: 2px;
`;

const ErrorsBar = styled.div`
  height: 26px;
  flex: none;
  display: grid;
  grid-template-columns: 530px 1fr;
  align-items: center;
  padding: 6px 0 0;
  letter-spacing: -0.5px;
`;

const CheckLabel = styled.label`
  display: flex;
  align-items: center;
  gap: 4px;
  letter-spacing: -0.45px;
`;

const Check = styled.span`
  width: 14px;
  height: 14px;
  display: flex;
  align-items: center;
  justify-content: center;
  border: 1px solid #b0b0b0;
  background: #fff;
`;

const Tabs = styled.div`
  height: 22px;
  flex: none;
  display: flex;
  align-items: flex-start;
`;

const Tab = styled.span`
  width: ${(p) => p.$w}px;
  height: ${(p) => (p.$active ? 23 : 21)}px;
  line-height: ${(p) => (p.$active ? 22 : 20)}px;
  text-align: center;
  letter-spacing: -0.54px;
  border: 1px solid #b5b5b5;
  border-top-color: ${(p) => (p.$active ? 'transparent' : '#b5b5b5')};
  border-left-color: ${(p) => (p.$active ? '#b5b5b5' : 'transparent')};
  border-radius: 0 0 3px 3px;
  background: ${(p) => (p.$active ? '#f6f6f6' : '#dcdcdc')};
`;

const TabLine = styled.i`
  flex: 1;
  height: 1px;
  background: #b5b5b5;
`;

const DotsRow = styled.div`
  height: 8px;
  flex: none;
  display: flex;
  align-items: center;
  justify-content: center;
  padding-left: 2px;
`;

const MessageBar = styled.div`
  height: 30px;
  flex: none;
  display: flex;
  align-items: center;
  padding: 1px 9px 0 8px;
  border: 1px solid #8d9f86;
  background: #dff0d8;
  letter-spacing: -0.43px;
  b { margin: 0 2px 0 9px; letter-spacing: -0.06px; }
  a { margin-left: 3px; color: #1e8a0a; text-decoration: underline; }
  em { margin-left: auto; margin-right: 19px; letter-spacing: -0.5px; }
`;

const MapCanvas = styled.div`
  flex: 1;
  min-height: 0;
  overflow: hidden;
  border: solid #b5b5b5;
  border-width: 0 1px;
`;

const LayersDock = styled.section`
  position: absolute;
  left: 11px;
  top: 236px;
  width: 189px;
  height: 300px;
  display: flex;
  flex-direction: column;
  background: #f0f0f0;
  box-shadow: 0 0 12px rgba(0, 0, 0, 0.38);
`;

const LayersTitle = styled.div`
  height: 31px;
  flex: none;
  display: flex;
  background: #fff;
  color: #8d8d8d;
  padding: 7px 1px 0 8px;
  line-height: 18px;
  letter-spacing: -0.1px;
`;

const LayersClose = styled.span`
  width: 19px;
  height: 19px;
  margin-left: auto;
  background: #e2e2e2;
  color: #fff;
  text-align: center;
  font-size: 10px;
`;

const LayersTools = styled.div`
  height: 31px;
  flex: none;
  display: flex;
  align-items: center;
  padding: 0 0 1px 8px;
`;

const LayerToolSlot = styled.span`
  width: ${(p) => p.$w}px;
  flex: none;
`;

const LayersTree = styled.div`
  flex: 1;
  border: 1px solid #b5b5b5;
  background: #fff;
`;

const LayerRow = styled.div`
  height: 18px;
  display: flex;
  align-items: center;
  padding-left: 23px;
  background: #f0f0f0;
  font-weight: 700;
  letter-spacing: -0.27px;
  u { margin-left: 6px; text-underline-offset: 1px; }
`;

const Swatch = styled.i`
  width: 16px;
  height: 16px;
  margin-left: 6px;
  background: #6a7bc4;
  border: 1px solid #42558a;
`;

const Tick = () => (
  <svg width="10" height="10" viewBox="0 0 10 10" fill="none"><path d="M1.500 4.500l2.500 4L8.500 1" stroke="#000" strokeWidth="1.900" /></svg>
);

const Folder = ({ home, open }) => (
  <svg width="16" height="16" viewBox="0 0 16 16" fill="none">
    {open
      ? <g><path d="M1.500 2.500h6l1 1.500h6" stroke="#858585" strokeWidth="2" /><path d="M1.500 14.500v-8h5l1.500 2h6.500v6z" fill="#efefef" stroke="#8a8a8a" /></g>
      : <path d="M1.500 14.500V2.500h6l1.500 2h5.500v10z" fill="#efefef" stroke="#8a8a8a" />}
    {home && <path d="M4 9.500l4-3.500 4 3.500M5.500 8.500V13h5V8.500" fill="#fff" stroke="#333" />}
  </svg>
);

const FavStar = () => (
  <svg width="16" height="16" viewBox="0 0 16 16"><path d="M8 .700l2 5h5.300l-4.200 3.300 1.600 5.800L8 11.500l-4.700 3.300L4.900 9 .7 5.700H6z" fill="#fdf04f" stroke="#c9a911" strokeWidth="1" /></svg>
);

const Arrow = ({ open }) => (
  <svg width="9" height="9" viewBox="0 0 9 9"><path d={open ? 'M1 2.500h8L5 6.500z' : 'M3 .500L7 4.500l-4 4z'} fill="#555" /></svg>
);

const DockBtns = () => (
  <DockButtons>
    <svg width="12" height="12" viewBox="0 0 12 12" fill="none"><rect x=".6" y=".6" width="10.800" height="10.800" rx="2" stroke="#6a6a6a" strokeWidth="1.100" /><path d="M5 4.500v-2h4.500V7H7.500M2.500 5H7v4.500H2.500z" stroke="#555" /></svg>
    <svg width="12" height="12" viewBox="0 0 12 12" fill="none"><rect x=".6" y=".6" width="10.800" height="10.800" rx="2" stroke="#6a6a6a" strokeWidth="1.100" /><path d="M3 3l6 6M9 3L3 9" stroke="#555" strokeWidth="2" /></svg>
  </DockButtons>
);

const Funnel = () => <g><path d="M1 3h22l-8 9v11h-6V12z" fill="#6b96c8" stroke="#456c99" /><path d="M1 1.500h22v4H1z" fill="#fde74f" stroke="#c4a000" /></g>;
const Collapse = ({ down }) => (
  <g><path d="M1 2h7M3 2v18h6M3 9h5" stroke="#777" strokeWidth="1.600" /><rect x="7" y="6" width="5" height="5" fill="#fff" stroke="#f08a1c" strokeWidth="2" /><rect x="7" y="17" width="5" height="5" fill="#fff" stroke="#f08a1c" strokeWidth="2" />
    <path d={down ? 'M17 23l-7-8h4V2h6v13h4z' : 'M17 1l-7 8h4v14h6V9h4z'} fill="#5c88bd" stroke="#34577f" /></g>
);
const YellowCheck = () => <path d="M2 12l3-2 4 5L21 2 10 22z" fill="#fde02f" stroke="#3d3a10" strokeWidth="1.500" />;

const menus = [
  ['Pro', 'j', 'ect', 37], ['', 'E', 'dit', 20], ['', 'V', 'iew', 25], ['', 'L', 'ayer', 28], ['', 'S', 'ettings', 42],
  ['', 'P', 'lugins', 39], ['Vect', 'o', 'r', 33], ['', 'R', 'aster', 32], ['', 'D', 'atabase', 48], ['', 'M', 'esh', 29],
  ['Pro', 'c', 'essing', 57], ['', 'H', 'elp', 26],
];

const treeItems = [
  [0, null, <FavStar />, 'Favorites'],
  [0, 'closed', <Svg s={16}>{I.book}</Svg>, 'Spatial Bookmarks'],
  [0, 'closed', <Folder home />, 'Home'],
  [0, 'closed', <Folder />, 'C:\\ (OS)'],
  [0, 'closed', <Folder />, 'D:\\ (DATA)'],
  [0, 'open', <Folder open />, 'E:\\ (DATA)'],
  [1, 'closed', <Folder />, 'Arcgis'],
  [1, 'closed', <Folder />, 'Badan Pusat Statistik'],
  [1, 'closed', <Folder />, 'bahan bps'],
  [1, 'closed', <Folder />, 'baru'],
  [1, 'closed', <Folder />, 'Bimillah bahasi'],
];

const boundary = 'M469 735L468 714L415 710L440 695L468 527L509 605L558 550L588 538L635 662.500L938 415.500L1000 410L1349 405L1361 474L1372 472';

const MapView = () => (
  <svg width="1052" height="316" viewBox="313 411 1052 316" fill="none">
    <rect x="313" y="411" width="1052" height="316" fill="#9a7db7" />
    <path d={`${boundary}V740H469z`} fill="#558694" />
    <g strokeLinejoin="round">
      <path d={boundary} stroke="#558a98" strokeOpacity=".75" strokeWidth="6" />
      <path d={boundary} stroke="#289872" strokeOpacity=".8" strokeWidth="3.600" transform="translate(.3 .6)" />
      <path d={boundary} stroke="#14573f" strokeWidth="1.100" />
    </g>
    <path d="M388 411L468 527L522 450.500L605 447L575 543M588 538L678 411M415 710L384 728" stroke="#2c2530" strokeWidth="1.100" />
    <path d="M574.500 543.500L588.500 538" stroke="#f00" strokeWidth="4.500" />
  </svg>
);

export default function App() {
  return (
    <Window>
      <Global />
      <TitleBar>
        <svg width="16" height="16" viewBox="0 0 16 16" fill="none">
          <circle cx="7.500" cy="7.500" r="5.700" stroke="#76a834" strokeWidth="3.400" />
          <path d="M8 8l7 7" stroke="#fff" strokeWidth="4.500" />
          <path d="M9 9l6 6" stroke="#5d8f27" strokeWidth="3" />
          <path d="M6.500 6h3L9.500 9.500h-3z" fill="#ee7913" />
        </svg>
        <WindowTitle>*Untitled Project — QGIS</WindowTitle>
        <Controls>
          <svg width="10" height="11" viewBox="0 0 10 11"><path d="M0 4.500h10" stroke="#000" /></svg>
          <svg width="10" height="12" viewBox="0 0 10 12" fill="none"><path d="M.500 2.500h7v7h-7zM2.500 2.500v-2h7v7h-2" stroke="#000" /></svg>
          <svg width="10" height="12" viewBox="0 0 10 12"><path d="M0 0l10 10M10 0L0 10" stroke="#000" strokeWidth="1.100" /></svg>
        </Controls>
      </TitleBar>
      <MenuBar>
        {menus.map(([a, u, b, w]) => <MenuItem key={u + b} $w={w}>{a}<u>{u}</u>{b}</MenuItem>)}
      </MenuBar>

      <ToolRow>
        <Grip w={12} />
        <Tools names="newFile open save layout layoutMgr style" />
        <Grip />
        <Tools names="pan panSel zoomIn zoomOut zoomFull zoomSel zoomLayer" />
        <T n="zoomNative" off />
        <T n="zoomLast" />
        <T n="zoomNext" off />
        <Tools names="mapNew map3d bookNew book clock refresh" />
        <Grip />
        <Tools names="identify abacus gear sigma table" /><A />
        <T n="measure" /><A />
        <T n="tips" />
        <T n="action" off /><AO />
      </ToolRow>

      <ToolRow>
        <Grip w={12} />
        <Tools names="dsManager geopackage shapefile feather memory mesh" />
        <Sep /><T n="virtual" /><Sep />
        <Grip />
        <T n="pencils" off /><T n="pencil" />
        <Tools names="saveEdits addFeature vertex" off /><AO />
        <Tools names="multiEdit del cut copy paste undo redo" off />
        <Grip />
        <Tools names="label diagram" /><Sep />
        <Tools names="labelPin labelRed" /><Sep />
        <Tools names="tagPin tagEye tagMove tagRot tagEdit" off={0.4} />
        <Grip /><Grip />
        <T n="python" /><Grip /><T n="help" /><Grip />
        <Pressed $w={32} $ml={2}><Svg>{I.topology}</Svg></Pressed>
      </ToolRow>

      <ToolRow>
        <Grip w={12} />
        <Tools names="cad curve" off /><AO />
        <T n="blobRight" off={0.36} /><AO />
        <Tools names="blobTurn blobMove simplify addRing addPart fillRing delRing delPart reshape offset reverse trim splitF splitP merge mergeAttr scale" off={0.38} /><AO />
        <Grip />
        <Tools names="hist1 hist2 hist1 hist2 sunUp sunDown conUp conDown gamUp gamDown" off={0.42} />
        <Spacer />
        <Grip /><T n="magnet" /><Chevrons />
      </ToolRow>

      <ToolRow>
        <Grip w={12} />
        {['arc', 'circle', 'ellipse', 'rect', 'polygon'].map((n) => <React.Fragment key={n}><T n={n} off /><AO /></React.Fragment>)}
        <Grip />
        <Pressed $w={32} $ml={1}><Svg>{I.select}</Svg></Pressed>
        <Pressed $w={12}><A /></Pressed>
        <T n="selForm" /><A />
        <T n="desel" /><A />
        <T n="selLoc" />
        <Grip />
        <Tools names="meshEdit meshSel" off /><AO />
        <Tools names="meshTrans meshForce" off={0.5} /><AO />
        <Grip />
        <ButtonTile label="AD" $bg="#ffb9c6" $fg="#ff1a1a" $weight={700} />
        <ButtonTile label="MO" $bg="#dfe7df" $fg="#c8d6c8" $weight={600} />
        <ButtonTile label="RO" $bg="#bfb7c0" $fg="#d3ccd0" $weight={500} />
        <SpinBox>0,000
          <SpinButtons>
            <svg width="8" height="12" viewBox="0 0 8 12"><path d="M0 4.500L4 .500l4 4zM0 7.500h8l-4 4z" fill="#888" /></svg>
          </SpinButtons>
        </SpinBox>
        <ButtonTile label="SC" $bg="#d6d9c8" $fg="#b9bfae" $weight={500} />
        <ButtonTile label="ADJ" $bg="#c7bfc1" $fg="#f4f4f4" $weight={500} />
        <ButtonTile label="2P" $bg="#d3dcdb" $fg="#dcc9ce" $weight={600} />
        <ButtonTile label="T-" $bg="#f8f8f8" $fg="#9a9a9a" $weight={600} $ls={1} />
        <ButtonTile label="T+" $bg="#a6a6a6" $fg="#f5f5f5" $weight={600} $ls={0} />
        <ButtonTile label="!!" $bg="#d6dccf" $fg="#dcc0c0" $weight={700} $ls={4} />
        <Tool><Svg><rect width="24" height="24" fill="#b6b6bf" /><path d="M1 9l9-7v4c9 0 12 4 13 16-3-7-6-8-13-8v4z" fill="#d0d4dc" /></Svg></Tool>
        <Grip />
        <T n="annoLayer" /><A />
        <Tools names="annoSel annoPoly annoLine annoStar annoText" />
        <Sep /><T n="balloon" /><A />
        <Grip /><T n="rho" />
        <Spacer /><Chevrons />
      </ToolRow>

      <Workspace>
        <BrowserDock>
          <DockTitle>Browser<DockBtns /></DockTitle>
          <DockTools $pl={8}>
            <Svg s={16}><path d="M1.500 2.500h18v18h-18z" fill="#f4f4f4" stroke="#777" strokeWidth="1.500" /><circle cx="19" cy="19" r="4" fill="#fff" stroke="#3f8848" strokeWidth="2.400" /></Svg>
            <Svg s={16}><Refresh /></Svg>
            <Svg s={16}><Funnel /></Svg>
            <Svg s={16}><Collapse /></Svg>
            <Svg s={16}><circle cx="12" cy="12" r="10.500" fill="#5b8cc6" stroke="#4773a6" /><text x="12" y="18.500" textAnchor="middle" fontSize="19" fontWeight="700" fontStyle="italic" fontFamily="Liberation Serif, serif" fill="#fff">i</text></Svg>
          </DockTools>
          <TreeFrame>
            <Tree>
              {treeItems.map(([depth, state, icon, label]) => (
                <TreeRow key={label} $depth={depth}>
                  <Twisty>{state && <Arrow open={state === 'open'} />}</Twisty>
                  <NodeIcon>{icon}</NodeIcon>
                  {label}
                </TreeRow>
              ))}
            </Tree>
            <VScroll><ScrollArrow /><ScrollThumb $h={129} /></VScroll>
          </TreeFrame>
        </BrowserDock>

        <Splitter><SplitDots /></Splitter>

        <Center>
          <DockTitle>Topology Checker Panel<DockBtns /></DockTitle>
          <DockTools $pl={8}>
            <Svg s={16}><YellowCheck /></Svg>
            <Svg s={16}><rect x="1.500" y="1.500" width="21" height="21" fill="#ddd" stroke="#555" strokeWidth="1.500" strokeDasharray="1.500 2" /><g transform="translate(6 7) scale(.75)"><YellowCheck /></g></Svg>
            <Svg s={16}><path d="M2 8c1 4 5 5 7 4l3 2 2-3-2-3c0-4-3-6-6-6l2 4-2 3z" fill="#e8e8e8" stroke="#555" strokeWidth="1.300" /><path d="M12 12l9 9" stroke="#7c6811" strokeWidth="6" /><path d="M12.500 12.500l8 8" stroke="#f3dc7c" strokeWidth="3.500" /></Svg>
          </DockTools>
          <TableFrame>
            <Grid>
              <HeadRow><HeadCell $pl={12}>Error</HeadCell><HeadCell>Layer</HeadCell><HeadCell>Feature ID</HeadCell></HeadRow>
              <Viewport>
                {[1, 2, 3].map((n) => (
                  <DataRow key={n} $sel={n === 2}>
                    <span>{n}</span><Cell>overlaps</Cell><Cell>finalpetasls050</Cell><NumCell>94</NumCell>
                  </DataRow>
                ))}
              </Viewport>
            </Grid>
            <VScroll $w={15}>
              <ScrollArrow />
              <Spacer />
              <ScrollThumb $h={28} $top />
              <ScrollArrow $down />
            </VScroll>
          </TableFrame>
          <ErrorsBar>
            <CheckLabel><Check><Tick /></Check>Show errors</CheckLabel>
            <span>4 errors were found</span>
          </ErrorsBar>
          <Tabs>
            <Tab $w={139} $active>Topology Checker Panel</Tab>
            <Tab $w={116}>Processing Toolbox</Tab>
            <TabLine />
          </Tabs>
          <DotsRow><SplitDots $row /></DotsRow>
          <MessageBar>
            <svg width="26" height="20" viewBox="0 0 26 20"><path d="M2 2l8 8L24 1 9 18z" fill="#2fdc3a" stroke="#17691d" strokeWidth="1.200" /></svg>
            <b>Layer Exported:</b>
            Successfully saved vector layer to
            <a>G:\Final Peta SLS 150\Peta Digital SLS 150.gpkg</a>
            <em>1 more</em>
            <svg width="19" height="20" viewBox="0 0 19 20"><circle cx="9" cy="9" r="8.600" fill="#33372f" /><path d="M5.500 5.500l7 7M12.500 5.500l-7 7" stroke="#fff" strokeWidth="2.600" /></svg>
            <ArrowBox />
          </MessageBar>
          <MapCanvas><MapView /></MapCanvas>
        </Center>

        <LayersDock>
          <LayersTitle>Layers<LayersClose>x</LayersClose></LayersTitle>
          <LayersTools>
            <LayerToolSlot $w={25}><Svg s={16}><path d="M1 10c5-4 8-3 14 1l-6 10c-4-1-7-4-8-11z" fill="#e8bf6a" stroke="#a6741e" /><path d="M1 10c3-3 5-3 7-2l-6 7z" fill="#e33" /><path d="M2 15l4-4 5 8-3 2z" fill="#5ba3dd" /><path d="M13 11L23 1" stroke="#b8750f" strokeWidth="3.500" /></Svg></LayerToolSlot>
            <LayerToolSlot $w={26}><Svg s={16}><g stroke="#666" strokeWidth="1.300" fill="#f2f2f2"><path d="M1.500 9h10v12h-10z" /><path d="M5 6h10v12H5z" /><path d="M9 4h11v12H9z" /></g><path d="M14 1v10" stroke="#4773a6" strokeWidth="2" /><rect x="14.500" y="14.500" width="8" height="8" fill="#fff" stroke="#3f8848" strokeWidth="2.400" /></Svg></LayerToolSlot>
            <LayerToolSlot $w={25}><Svg s={16}><path d="M1 12c6-9 15-9 21 0-6 8-15 8-21 0z" fill="#fff" stroke="#777" strokeWidth="1.600" /><circle cx="12" cy="11" r="5" fill="#6b96c8" stroke="#345" /><circle cx="12" cy="11" r="2" fill="#111" /><path d="M16 20h8l-4 4z" fill="#444" /></Svg></LayerToolSlot>
            <LayerToolSlot $w={26}><Svg s={16}><Funnel /><path d="M16 20h8l-4 4z" fill="#444" /></Svg></LayerToolSlot>
            <LayerToolSlot $w={18}><Svg s={16}><path d="M12 2c-5-2-9-1-9 2 0 2 2 3 5 3-4 0-6 1-6 4s5 5 10 2" stroke="#70407c" strokeWidth="2.400" /><path d="M13 13h9v3l-1 1v6h-2v-5h-2v5h-3v-6l-1-1z" fill="#aaa" stroke="#777" /></Svg></LayerToolSlot>
            <LayerToolSlot $w={17}><ArrowBox /></LayerToolSlot>
            <LayerToolSlot $w={26}><Svg s={16}><Collapse down /></Svg></LayerToolSlot>
            <Chevrons />
          </LayersTools>
          <LayersTree>
            <LayerRow><Check><Tick /></Check><Swatch /><u>finalpetasls050</u></LayerRow>
          </LayersTree>
        </LayersDock>
      </Workspace>
    </Window>
  );
}
